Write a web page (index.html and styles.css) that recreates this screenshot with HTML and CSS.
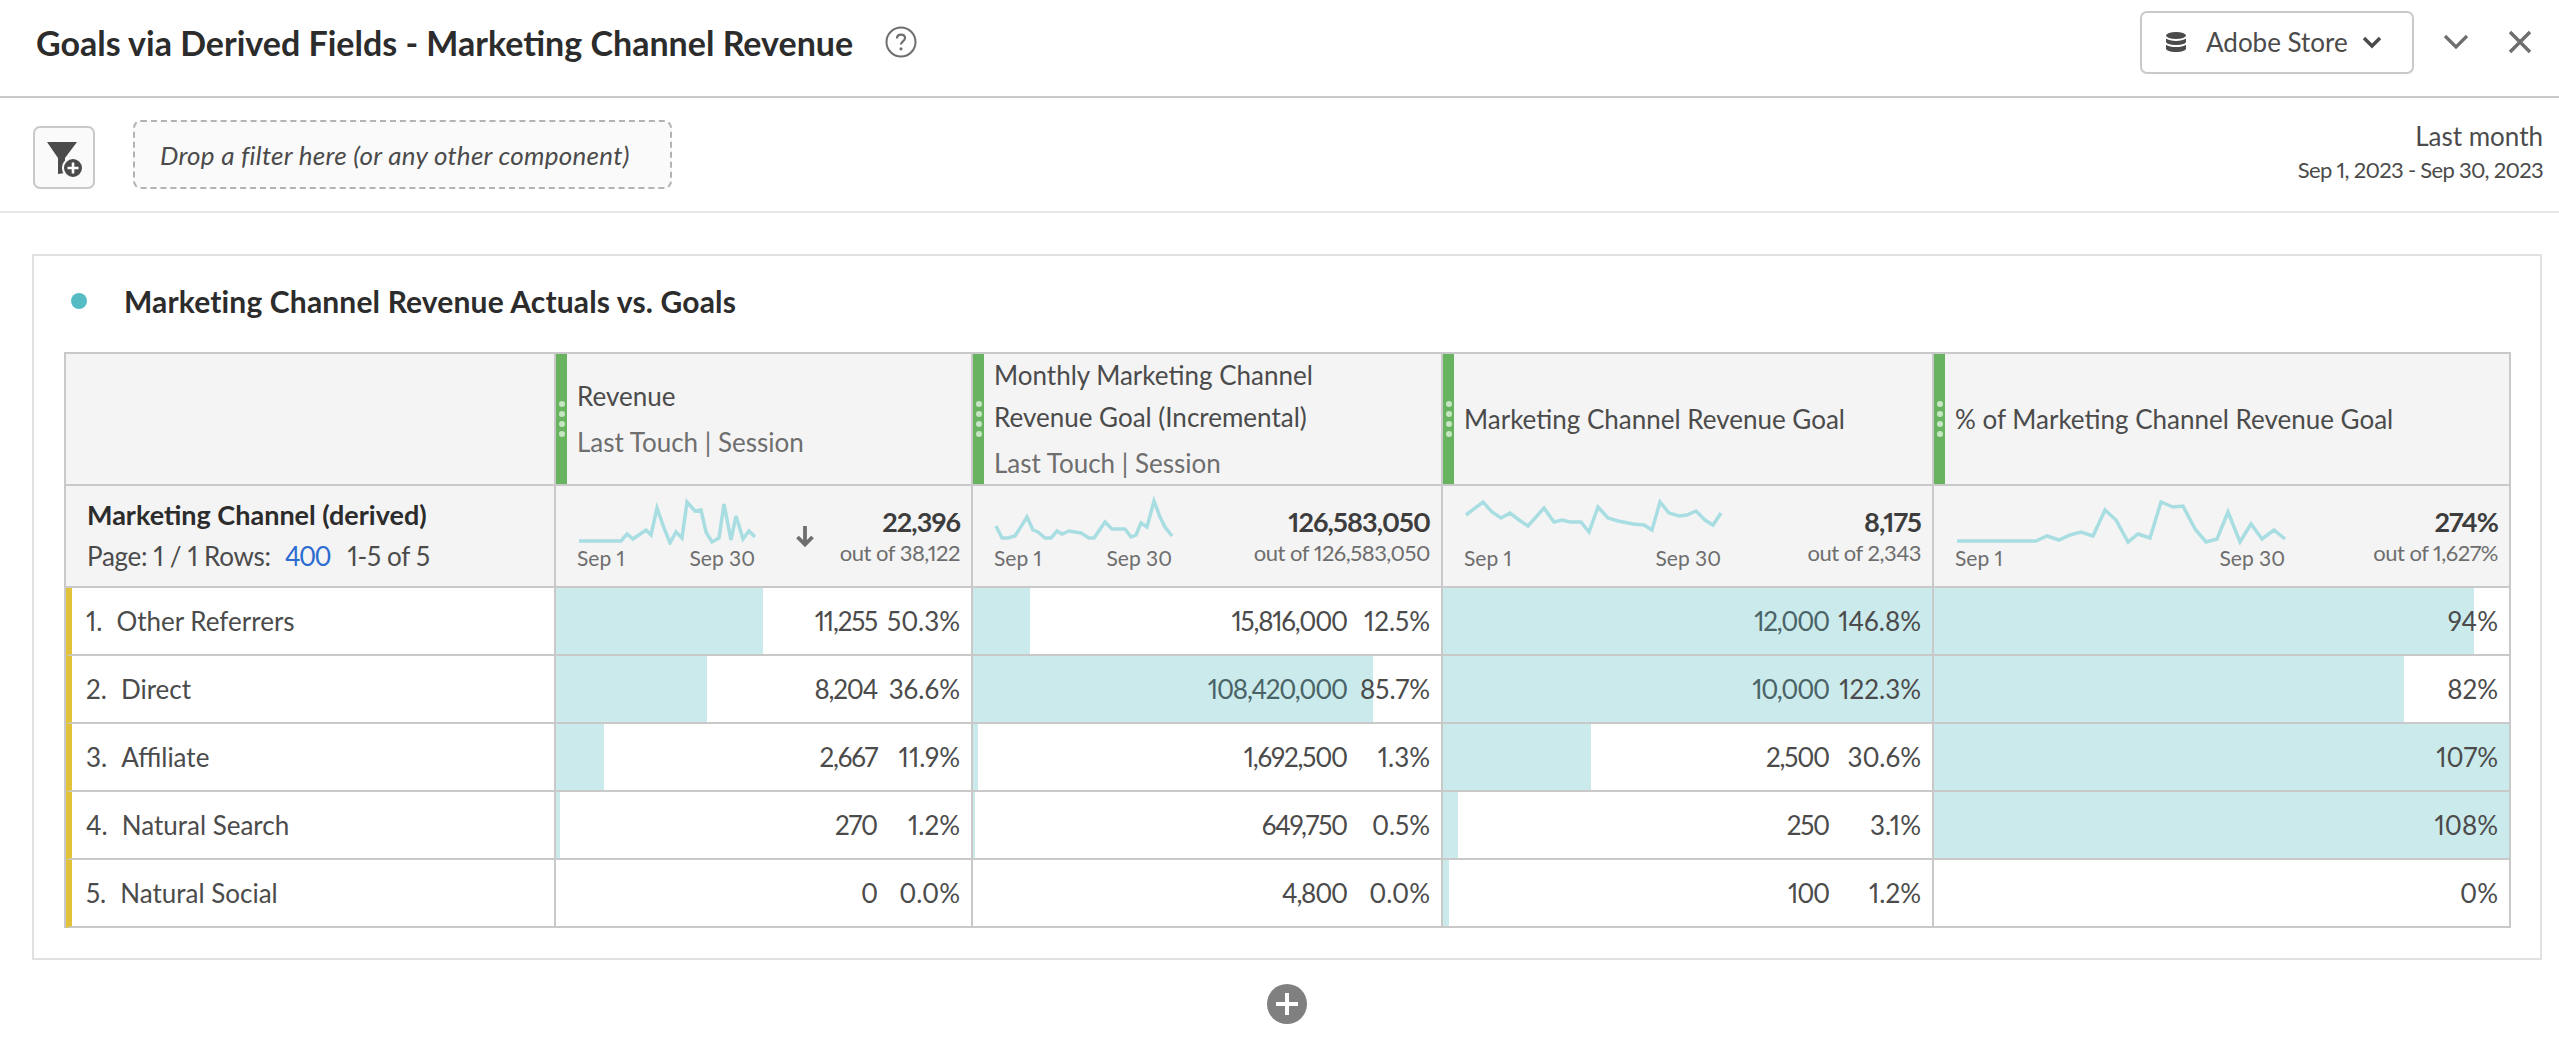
FILE: index.html
```html
<!DOCTYPE html>
<html lang="en">
<head>
    <meta charset="UTF-8">
    <meta name="viewport" content="width=device-width, initial-scale=1.0">
    <title>Goals via Derived Fields - Marketing Channel Revenue</title>
    <link rel="stylesheet" href="styles.css">
</head>
<body>
    <!-- title bar -->
    <header class="topbar">
        <h1 class="project-title">Goals via Derived Fields - Marketing Channel Revenue</h1>
        <svg class="help-icon" width="32" height="32" viewBox="0 0 32 32">
            <circle cx="16" cy="16" r="14.5" fill="none" stroke="#6e6e6e" stroke-width="2"/>
            <path d="M12 12.5c0-2.4 1.8-3.8 4-3.8s4 1.3 4 3.4c0 3.2-4 3.4-4 6.4" fill="none" stroke="#6e6e6e" stroke-width="2.2"/>
            <circle cx="16" cy="22.8" r="1.6" fill="#6e6e6e"/>
        </svg>
        <div class="topbar-right">
            <button class="store-btn">
                <svg width="20" height="20" viewBox="0 0 20 20" fill="#4b4b4b">
                    <ellipse cx="10" cy="3.500" rx="10" ry="3.500"/>
                    <path d="M0 6.600c2 1.700 6 2.300 10 2.300s8-.6 10-2.300v3.200c0 2-4.500 3.200-10 3.200S0 11.800 0 9.800z"/>
                    <path d="M0 12.800c2 1.700 6 2.300 10 2.300s8-.6 10-2.300v3.700c0 2-4.500 3.500-10 3.500S0 18.500 0 16.500z"/>
                </svg>
                <span class="store-name">Adobe Store</span>
                <svg width="20" height="14" viewBox="0 0 20 14"><path d="M2 3l8 8 8-8" fill="none" stroke="#4b4b4b" stroke-width="3.400"/></svg>
            </button>
            <svg class="top-icon" width="26" height="18" viewBox="0 0 26 18"><path d="M2 3l11 11L24 3" fill="none" stroke="#6e6e6e" stroke-width="3.200"/></svg>
            <svg class="top-icon" width="24" height="24" viewBox="0 0 24 24"><path d="M2 2l20 20M22 2L2 22" fill="none" stroke="#6e6e6e" stroke-width="3.400"/></svg>
        </div>
    </header>

    <!-- filter bar -->
    <div class="filterbar">
        <button class="filter-btn">
            <svg width="36" height="36" viewBox="0 0 36 36">
                <path d="M0 0h30L18 16v15l-7 1V16z" fill="#4b4b4b"/>
                <circle cx="26" cy="26" r="10" fill="#4b4b4b" stroke="#fafafa" stroke-width="2"/>
                <path d="M26 20.500v11M20.500 26h11" stroke="#fff" stroke-width="2.600"/>
            </svg>
        </button>
        <div class="dropzone">Drop a filter here (or any other component)</div>
        <div class="daterange">
            <div class="daterange-name">Last month</div>
            <div class="daterange-dates">Sep 1, 2023 - Sep 30, 2023</div>
        </div>
    </div>

    <main class="workspace">
        <section class="panel">
            <div class="panel-head">
                <span class="panel-dot"></span>
                <h2 class="panel-title">Marketing Channel Revenue Actuals vs. Goals</h2>
            </div>

            <div class="freeform">
                <!-- column headers -->
                <div class="hd"></div>
                <div class="hd">
                    <div class="grip"><i></i><i></i><i></i><i></i></div>
                    <div class="hd-text">
                        <div class="hd-name">Revenue</div>
                        <div class="hd-sub">Last Touch | Session</div>
                    </div>
                </div>
                <div class="hd">
                    <div class="grip"><i></i><i></i><i></i><i></i></div>
                    <div class="hd-text">
                        <div class="hd-name">Monthly Marketing Channel<br>Revenue Goal (Incremental)</div>
                        <div class="hd-sub">Last Touch | Session</div>
                    </div>
                </div>
                <div class="hd">
                    <div class="grip"><i></i><i></i><i></i><i></i></div>
                    <div class="hd-text">
                        <div class="hd-name">Marketing Channel Revenue Goal</div>
                    </div>
                </div>
                <div class="hd">
                    <div class="grip"><i></i><i></i><i></i><i></i></div>
                    <div class="hd-text">
                        <div class="hd-name">% of Marketing Channel Revenue Goal</div>
                    </div>
                </div>

                <!-- summary row -->
                <div class="sum sum-dim">
                    <div class="dim-name">Marketing Channel (derived)</div>
                    <div class="dim-page">Page: 1 / 1 Rows: <a class="rows-link">400</a> <span class="dim-range">1-5 of 5</span></div>
                </div>
                <div class="sum">
                    <div class="spark">
                        <svg width="180" height="50" viewBox="0 0 180 50"><polyline points="2,46 44,46 50,39 56,44 69,35 74,40 80,13 87,33 93,48 99,37 105,43 110,7 118,16 124,15 129,37 135,47 142,43 147,9 154,45 159,21 166,44 172,36 178,42"/></svg>
                        <div class="spark-dates"><span>Sep 1</span><span>Sep 30</span></div>
                    </div>
                    <svg class="sort-arrow" width="18" height="22" viewBox="0 0 18 22"><path d="M9 1v18M1.500 12L9 19.500l7.500-7.500" fill="none" stroke="#6e6e6e" stroke-width="3.800"/></svg>
                    <div class="totals">
                        <div class="total">22,396</div>
                        <div class="out-of">out of 38,122</div>
                    </div>
                </div>
                <div class="sum">
                    <div class="spark">
                        <svg width="180" height="50" viewBox="0 0 180 50"><polyline points="2,31 8,43 14,43 21,41 33,22 39,35 44,37 51,43 57,43 63,36 68,39 75,36 87,38 95,43 100,43 111,27 118,34 131,34 137,42 142,40 147,28 153,32 160,6 166,22 171,32 178,41"/></svg>
                        <div class="spark-dates"><span>Sep 1</span><span>Sep 30</span></div>
                    </div>
                    <div class="totals">
                        <div class="total">126,583,050</div>
                        <div class="out-of">out of 126,583,050</div>
                    </div>
                </div>
                <div class="sum">
                    <div class="spark spark-md">
                        <svg width="259" height="50" viewBox="0 0 259 50"><polyline points="2,20 19,7 28,17 37,23 46,18 55,25 64,31 80,13 90,27 98,25 106,27 117,27 125,37 134,12 144,23 154,26 169,29 180,30 188,35 196,7 205,18 215,21 223,20 232,16 241,25 249,30 257,18"/></svg>
                        <div class="spark-dates"><span>Sep 1</span><span>Sep 30</span></div>
                    </div>
                    <div class="totals">
                        <div class="total">8,175</div>
                        <div class="out-of">out of 2,343</div>
                    </div>
                </div>
                <div class="sum">
                    <div class="spark spark-lg">
                        <svg width="332" height="50" viewBox="0 0 332 50"><polyline points="2,46 81,46 92,41 104,45 115,40 126,37 138,41 150,15 161,25 173,47 183,39 195,43 206,7 218,12 228,11 240,34 251,47 262,44 273,17 285,47 296,29 307,44 319,35 330,44"/></svg>
                        <div class="spark-dates"><span>Sep 1</span><span>Sep 30</span></div>
                    </div>
                    <div class="totals">
                        <div class="total">274%</div>
                        <div class="out-of">out of 1,627%</div>
                    </div>
                </div>

                <!-- data rows -->
                <div class="row-label"><span class="row-no">1.</span>Other Referrers</div>
                <div class="cell" style="--bar:207px"><span class="num">11,255</span><span class="pct">50.3%</span></div>
                <div class="cell" style="--bar:57px"><span class="num">15,816,000</span><span class="pct">12.5%</span></div>
                <div class="cell" style="--bar:100%"><span class="num on-bar">12,000</span><span class="pct pct-wide">146.8%</span></div>
                <div class="cell" style="--bar:540px"><span class="pct">94%</span></div>

                <div class="row-label"><span class="row-no">2.</span>Direct</div>
                <div class="cell" style="--bar:151px"><span class="num">8,204</span><span class="pct">36.6%</span></div>
                <div class="cell" style="--bar:400px"><span class="num on-bar">108,420,000</span><span class="pct">85.7%</span></div>
                <div class="cell" style="--bar:100%"><span class="num on-bar">10,000</span><span class="pct pct-wide">122.3%</span></div>
                <div class="cell" style="--bar:470px"><span class="pct">82%</span></div>

                <div class="row-label"><span class="row-no">3.</span>Affiliate</div>
                <div class="cell" style="--bar:48px"><span class="num">2,667</span><span class="pct">11.9%</span></div>
                <div class="cell" style="--bar:5px"><span class="num">1,692,500</span><span class="pct">1.3%</span></div>
                <div class="cell" style="--bar:148px"><span class="num">2,500</span><span class="pct pct-wide">30.6%</span></div>
                <div class="cell" style="--bar:100%"><span class="pct">107%</span></div>

                <div class="row-label"><span class="row-no">4.</span>Natural Search</div>
                <div class="cell" style="--bar:4px"><span class="num">270</span><span class="pct">1.2%</span></div>
                <div class="cell" style="--bar:2px"><span class="num">649,750</span><span class="pct">0.5%</span></div>
                <div class="cell" style="--bar:15px"><span class="num">250</span><span class="pct pct-wide">3.1%</span></div>
                <div class="cell" style="--bar:100%"><span class="pct">108%</span></div>

                <div class="row-label"><span class="row-no">5.</span>Natural Social</div>
                <div class="cell"><span class="num">0</span><span class="pct">0.0%</span></div>
                <div class="cell"><span class="num">4,800</span><span class="pct">0.0%</span></div>
                <div class="cell" style="--bar:6px"><span class="num">100</span><span class="pct pct-wide">1.2%</span></div>
                <div class="cell"><span class="pct">0%</span></div>
            </div>
        </section>

        <div class="add-row">
            <svg width="40" height="40" viewBox="0 0 40 40">
                <circle cx="20" cy="20" r="20" fill="#808080"/>
                <path d="M20 9v22M9 20h22" stroke="#fff" stroke-width="4"/>
            </svg>
        </div>
    </main>
</body>
</html>
```

FILE: styles.css
```css
* {
    box-sizing: border-box;
}
body {
    margin: 0;
    background: #fff;
    color: #4b4b4b;
    font-family: Lato, "Liberation Sans", sans-serif;
    font-size: 26px;
    font-variant-numeric: proportional-nums;
}
h1, h2 {
    margin: 0;
}
button {
    font-family: inherit;
    font-size: inherit;
    font-variant-numeric: inherit;
    color: inherit;
}

/* title bar */
.topbar {
    display: flex;
    align-items: center;
    height: 98px;
    padding: 0 27px 12px 36px;
    border-bottom: 2px solid #c9c9c9;
}
.project-title {
    font-size: 34px;
    font-weight: 700;
    color: #2c2c2c;
    white-space: nowrap;
}
.help-icon {
    margin-left: 32px;
}
.topbar-right {
    display: flex;
    align-items: center;
    margin-left: auto;
}
.store-btn {
    display: flex;
    align-items: center;
    width: 274px;
    height: 63px;
    padding: 0 30px 0 24px;
    background: #fff;
    border: 2px solid #c9c9c9;
    border-radius: 7px;
}
.store-name {
    flex: 1;
    padding-left: 20px;
    text-align: left;
    white-space: nowrap;
}
.top-icon {
    margin-left: 29px;
}
.top-icon:last-child {
    margin-left: 39px;
}

/* filter bar */
.filterbar {
    display: flex;
    align-items: center;
    height: 115px;
    padding: 0 16px 0 33px;
    border-bottom: 2px solid #e8e8e8;
}
.filter-btn {
    display: flex;
    align-items: center;
    justify-content: center;
    width: 62px;
    height: 63px;
    margin: 6px 38px 0 0;
    padding: 4px 0 0 2px;
    background: #fafafa;
    border: 2px solid #c9c9c9;
    border-radius: 7px;
}
.dropzone {
    display: flex;
    align-items: center;
    width: 539px;
    height: 69px;
    padding-left: 25px;
    background: #fafafa;
    border: 2px dashed #b3b3b3;
    border-radius: 8px;
    font-style: italic;
    letter-spacing: 0.25px;
    white-space: nowrap;
}
.daterange {
    margin: -4px 0 0 auto;
    text-align: right;
}
.daterange-name {
    line-height: 34px;
}
.daterange-dates {
    font-size: 22px;
    line-height: 34px;
    letter-spacing: -0.7px;
}

/* panel */
.workspace {
    padding: 41px 17px 0 32px;
}
.panel {
    padding: 0 30px 30px 30px;
    border: 2px solid #e1e1e1;
}
.panel-head {
    display: flex;
    align-items: center;
    height: 96px;
    padding-bottom: 6px;
}
.panel-dot {
    width: 16px;
    height: 16px;
    margin-left: 7px;
    border-radius: 50%;
    background: #55bcc6;
}
.panel-title {
    margin-left: 37px;
    font-size: 30px;
    font-weight: 700;
    letter-spacing: 0.15px;
    color: #2c2c2c;
}
.add-row {
    display: flex;
    justify-content: center;
    padding-top: 24px;
}

/* freeform table */
.freeform {
    display: grid;
    grid-template-columns: 490px 417px 470px 491px 577px;
    grid-template-rows: 132px 102px repeat(5, 68px);
    width: 2447px;
    border-top: 2px solid #c9c9c9;
    border-left: 2px solid #c9c9c9;
}
.hd, .sum, .cell, .row-label {
    border-right: 2px solid #c9c9c9;
    border-bottom: 2px solid #c9c9c9;
}
.hd, .sum {
    background-color: #f4f4f4;
}
.hd {
    display: flex;
}
.grip {
    display: flex;
    flex-direction: column;
    align-items: center;
    justify-content: center;
    gap: 4px;
    width: 11px;
    background: #68b360;
}
.grip i {
    width: 6px;
    height: 6px;
    border-radius: 50%;
    background: #c6e5c2;
}
.hd-text {
    align-self: center;
    padding-left: 10px;
    white-space: nowrap;
}
.hd-name {
    line-height: 42px;
}
.hd-sub {
    margin-top: 4px;
    line-height: 42px;
    color: #6e6e6e;
}

/* summary row */
.sum {
    display: flex;
    padding: 9px 11px 0 21px;
}
.sum-dim {
    display: block;
    padding: 11px 0 0 21px;
}
.dim-name {
    font-size: 27px;
    font-weight: 700;
    color: #2c2c2c;
    line-height: 36px;
    white-space: nowrap;
}
.dim-page {
    margin-top: 5px;
    line-height: 36px;
    letter-spacing: -0.3px;
    white-space: nowrap;
}
.rows-link {
    margin: 0 11px 0 8px;
    letter-spacing: -1.5px;
    color: #2c6bd0;
}
.spark {
    width: 180px;
}
.spark-md {
    width: 259px;
}
.spark-lg {
    width: 332px;
}
.spark svg {
    display: block;
}
.spark polyline {
    fill: none;
    stroke: #a8dde2;
    stroke-width: 3.5;
}
.spark-dates {
    display: flex;
    justify-content: space-between;
    margin-top: -1px;
    padding: 0 2px 0 0;
    font-size: 21px;
    line-height: 28px;
    color: #6e6e6e;
}
.sort-arrow {
    margin: 30px 0 0 39px;
}
.totals {
    margin-left: auto;
    text-align: right;
    white-space: nowrap;
}
.total {
    margin-top: 10px;
    font-size: 27px;
    font-weight: 700;
    line-height: 34px;
    letter-spacing: -0.9px;
    color: #3d3d3d;
}
.out-of {
    font-size: 22px;
    line-height: 28px;
    letter-spacing: -0.5px;
    color: #6e6e6e;
}

/* data rows */
.row-label {
    display: flex;
    align-items: center;
    padding-left: 14px;
    border-left: 6px solid #e0c33b;
}
.row-no {
    margin-right: 14px;
}
.cell {
    display: flex;
    align-items: center;
    justify-content: flex-end;
    padding-right: 11px;
    background: linear-gradient(#cbeaec, #cbeaec) no-repeat;
    background-size: var(--bar, 0) 100%;
}
.num {
    letter-spacing: -1.2px;
}
.num.on-bar {
    color: #4a6367;
}
.pct {
    width: 83px;
    text-align: right;
}
.pct-wide {
    width: 92px;
}
```
